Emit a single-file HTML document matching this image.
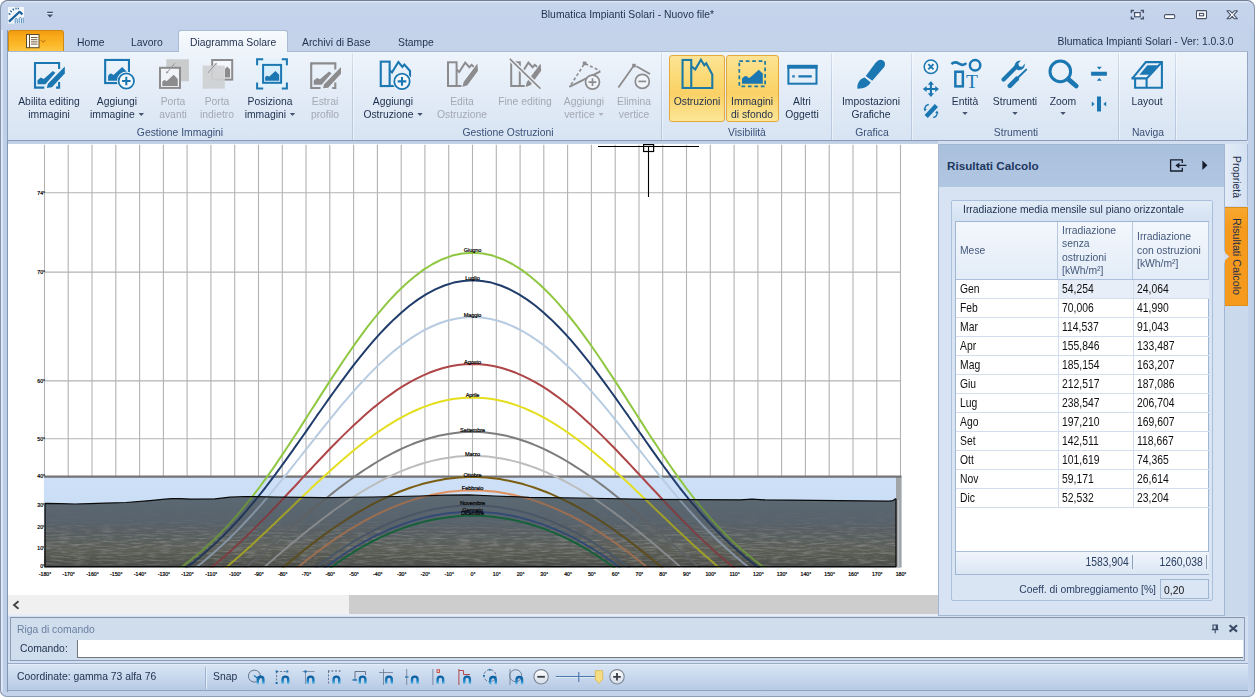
<!DOCTYPE html>
<html lang="it">
<head>
<meta charset="utf-8">
<title>Blumatica Impianti Solari - Nuovo file*</title>
<style>
*{box-sizing:border-box;margin:0;padding:0}
html,body{width:1255px;height:698px;overflow:hidden;background:#fff}
body{font-family:"Liberation Sans",sans-serif;font-size:11.5px;color:#1e2f4d;position:relative}
.abs{position:absolute}
#win{position:absolute;left:0;top:0;width:1255px;height:697px;background:#c4d3ea;border-radius:8px 8px 7px 7px;overflow:hidden}
#winborder{position:absolute;left:0;top:0;width:1255px;height:697px;border:1px solid #8895aa;border-top-color:#737f92;border-radius:8px 8px 7px 7px;border-bottom-color:#8c9db8;pointer-events:none;z-index:50}
#titlebar{position:absolute;left:1px;top:1px;width:1253px;height:29px;background:linear-gradient(#dbe6f5 0,#dbe6f5 1px,#c6d5ec 2px,#c3d2ea 100%)}
#title{position:absolute;left:0;top:8px;transform:scaleX(.9);width:1255px;text-align:center;font-size:11.5px;color:#1e2f4d}
#tabrow{position:absolute;left:0;top:30px;width:1255px;height:22px}
.tab{position:absolute;top:35.5px;transform:scaleX(.9);transform-origin:0 50%;font-size:11.5px;color:#1e2f4d;white-space:nowrap}
#acttab{position:absolute;left:178px;top:30px;width:110px;height:22px;background:linear-gradient(#f7fafd,#eef4fb);border:1px solid #a9bbd5;border-bottom:none;border-radius:3px 3px 0 0}
#appbtn{position:absolute;left:8px;top:30px;width:56px;height:22px;border-radius:3px 3px 0 0;border:1px solid #d08a10;border-bottom:none;background:linear-gradient(#f29a10,#f9aa1a 25%,#fcb626 60%,#fdc846)}
#ribbon{position:absolute;left:7px;top:51px;width:1241px;height:90px;background:linear-gradient(#eef4fb,#e3ecf7 45%,#d8e4f3);border:1px solid #8a9cb8;border-top-color:#a8b9d2;border-right-color:#93a5c0;border-radius:0 0 2px 2px}
#lband{position:absolute;left:1px;top:30px;width:7px;height:662px;background:linear-gradient(90deg,#dbe7f6 0,#dbe7f6 1.5px,#bed0e9 2.2px,#bccee8 5.9px,#8496b1 6.1px,#8496b1 100%)}
#rstrip{position:absolute;left:8px;top:141px;width:930px;height:3px;background:linear-gradient(#bccde3,#c6d4e7)}
#rband{position:absolute;left:1248px;top:30px;width:6px;height:662px;background:linear-gradient(90deg,#c3d3ea,#bccee8)}
#midbg{position:absolute;left:8px;top:141px;width:1240px;height:522px;background:#d3dff0}
.gsep{position:absolute;top:53px;width:1px;height:87px;background:linear-gradient(#d5dfed,#bdccdf 40%,#b8c8dd);box-shadow:1px 0 0 rgba(255,255,255,.45)}
.glab{position:absolute;top:125.6px;transform:scaleX(.9);font-size:11.5px;color:#3a5078;text-align:center;white-space:nowrap}
.rb{position:absolute;text-align:center;transform:scaleX(.9);font-size:11.5px;line-height:13px;color:#1e2f4d;white-space:nowrap}
.rb.dis{color:#a3a9b3}
.ic{position:absolute}
#canvas{position:absolute;left:8px;top:143.6px;width:930px;height:451.4px;background:#fff}
#hscroll{position:absolute;left:8px;top:595px;width:930px;height:19px;background:#f0f0f0;box-shadow:0 2px 0 #e6edf6}
#hthumb{position:absolute;left:341px;top:0;width:589px;height:19px;background:#cdcdcd}
</style>
<style>
body{font-size:11.5px}
.sx{display:inline-block;transform:scaleX(.9);transform-origin:0 50%;white-space:nowrap}
.hl{position:absolute;top:55px;height:67px;border:1px solid #e5a93a;border-radius:3px;background:linear-gradient(#fce395,#fbd973 35%,#fad166 58%,#fce698)}
.dd{display:inline-block;width:0;height:0;border-left:3px solid transparent;border-right:3px solid transparent;border-top:3px solid #44546f;vertical-align:middle;margin-left:1px}
.dd.d2{position:relative;top:-1.2px;margin-left:0}
.dd.dis{border-top-color:#b0b5bd}
#panel{position:absolute;left:938px;top:144px;width:287px;height:472px;background:#d7e3f2;border:1px solid #a3b7d3}
#phead{position:absolute;left:0;top:0;width:285px;height:42px;background:linear-gradient(#a9c0dd,#b1c6e1)}
#ptitle{position:absolute;left:8px;top:14px;font-weight:bold;font-size:11.7px;color:#1e3860;letter-spacing:0}
#gbox{position:absolute;left:12px;top:54.5px;width:262px;height:401px;border:1px solid #a9bfdb;border-radius:2px;background:#d9e5f3}
#gcap{position:absolute;left:0;top:0;width:260px;height:20px;padding:2.3px 0 0 11px;background:linear-gradient(#e2ecf7,#d3e1f2);color:#1e2f4d}
#grid{position:absolute;left:16px;top:76px;width:254px;height:354px;background:#fff;border:1px solid #9fb5d2}
.hrow{position:absolute;left:0;top:0;width:253px;height:57.5px;background:linear-gradient(#f3f7fc,#e3ecf7);border-bottom:1px solid #a9bfdb}
.hc{position:absolute;top:0;height:56.5px;border-right:1px solid #b5c8e0}
.hc span{position:absolute;left:3.8px;transform:scaleX(.9);transform-origin:0 0;line-height:13.3px;color:#44597c;white-space:nowrap}
.row{position:absolute;left:0;width:253px;height:19px;border-bottom:1px solid #d2deed;color:#111}
.row span{position:absolute;top:2.4px;transform:scaleX(.85);transform-origin:0 0;white-space:nowrap;font-size:12.2px}
.row b{position:absolute;left:103px;top:0;width:150px;height:18px;background:#e7eef7}
.row i{position:absolute;top:0;width:1px;height:19px;background:#d2deed}
.frow{position:absolute;left:0;top:329px;width:253px;height:23px;background:linear-gradient(#f0f5fb,#dbe6f4);border-top:1px solid #a9bfdb}
.ft{position:absolute;top:3.4px;transform:scaleX(.85);transform-origin:100% 0;text-align:right;padding-right:4px;color:#2b3f63;font-size:12.2px;border-right:1px solid #7f93b0;height:14px}
#coefl{transform:scaleX(.9);transform-origin:100% 0;position:absolute;left:57px;top:438px;width:160px;text-align:right;color:#2b3f63;font-size:11.5px}
#coefv{position:absolute;left:221px;top:434px;width:49px;height:20px;border:1px solid #9fb5d2;background:#dbe6f4;padding:4px 0 0 3px;color:#111;font-size:11.5px}
#sidetabs{position:absolute;left:1225px;top:144px;width:23px;height:472px;background:#cbd9ed}
#st1{position:absolute;left:0;top:0;width:23px;height:62px;background:linear-gradient(90deg,#e3ecf7,#d4e1f2);border-right:1px solid #a3b7d3}
#st2{position:absolute;left:0;top:63px;width:22.5px;height:98.5px;background:linear-gradient(#f8a830,#f59a1c 20%,#f59a1c);border:1px solid #dd8f1c;border-left:none;border-radius:0 1px 1px 0}
#st1 span,#st2 span{position:absolute;left:17.5px;top:11.5px;transform-origin:0 0;transform:rotate(90deg) scaleX(.9);white-space:nowrap;font-size:11.5px;color:#1e2f4d}
#st2 span{top:9.5px;transform:rotate(90deg) scaleX(.935)}
#cmd{position:absolute;left:10px;top:617px;width:1235px;height:44px;background:#d0dded;border:1px solid #8a9cb8;border-top-color:#8193ad}
#cmdh{transform:scaleX(.9);transform-origin:0 0;white-space:nowrap;position:absolute;left:6px;top:5px;color:#6b80a1;font-size:11.5px}
#cmdl{transform:scaleX(.9);transform-origin:0 0;white-space:nowrap;position:absolute;left:9px;top:24px;color:#1e2f4d;font-size:11.5px}
#cmdi{position:absolute;left:66px;top:22px;width:1166px;height:18px;background:#fff;border-left:1px solid #70757d;border-bottom:1px solid #70757d}
#status{position:absolute;left:8px;top:663px;width:1240px;height:28px;background:linear-gradient(#d9e5f4,#c8d8ed 50%,#b7cae4);border-top:1px solid #9aabc5;border-bottom:1px solid #8ea4c4;box-shadow:inset 0 1px 0 #e4edf8}
#coord{transform:scaleX(.9);transform-origin:0 0;white-space:nowrap;position:absolute;left:9px;top:6.3px;font-size:11.5px;color:#1e2f4d}
#ssep{position:absolute;left:197px;top:3px;width:1px;height:22px;background:#9db2d0;box-shadow:1px 0 0 #e6eef8}
#snap{transform:scaleX(.9);transform-origin:0 0;white-space:nowrap;position:absolute;left:205px;top:6.3px;font-size:11.5px;color:#1e2f4d}
</style>
</head>
<body>
<div id="win">
<div id="titlebar"></div>
<div id="lband"></div><div id="rband"></div><div id="midbg"></div><div id="rstrip"></div>
<div id="title">Blumatica Impianti Solari - Nuovo file*</div>
<svg class="abs" style="left:1120px;top:0" width="135" height="30" viewBox="1120 0 135 30" fill="none">
<g stroke="#47536b" stroke-width="1.1">
<path d="M1131.4 13V10.6H1134M1140.6 10.6H1143.3V13M1143.3 16.4V18.8H1140.6M1134 18.8H1131.4V16.4" stroke-width="1.5"/>
<rect x="1134.6" y="12.6" width="5.6" height="4.2" fill="#fff" stroke-width="1.2"/>
<rect x="1164.5" y="14.6" width="10.2" height="3.9" rx="1.2" fill="#fff"/>
<rect x="1196.5" y="10.6" width="10" height="8" rx="0.8" fill="#fff"/>
<rect x="1199.4" y="13.4" width="4.2" height="2.4" fill="#fff"/>
<path d="M1227 10.8H1230L1232.2 13.2L1234.4 10.8H1237.4L1233.8 14.8L1237.4 18.8H1234.4L1232.2 16.4L1230 18.8H1227L1230.6 14.8Z" fill="#fff" stroke-linejoin="round"/>
</g>
</svg>

<div id="appbtn"></div>
<svg class="abs" style="left:0;top:0" width="80" height="52" viewBox="0 0 80 52" fill="none">
<rect x="8" y="7" width="16" height="16.6" fill="#f2f6fb"/>
<path d="M9 21.6L19.6 11.8L22.4 14.4" stroke="#1a5f98" stroke-width="2.2" stroke-linejoin="round"/>
<path d="M8.6 13.6L10.4 14.4M10.2 10.6L11.8 12M12.8 8.6L13.8 10.4M15.8 7.6L16.2 9.4M18.4 7.6L18.2 9.2" stroke="#1a5f98" stroke-width="1.2"/>
<path d="M15.2 23.4V19.4C15.2 18.2 17.2 18.2 17.2 19.4V23.4M19.2 23.4V18.6C19.2 17.2 21.4 17.2 21.4 18.6V23.4M23.2 23.4V17.6" stroke="#3d7fb2" stroke-width="0.9"/>
<path d="M47.2 12.4H52.8" stroke="#3f4d66" stroke-width="1.2"/><path d="M47 14.4H53L50 17.6Z" fill="#3f4d66"/>
<path d="M47.2 13.6H52.8" stroke="#eef3fa" stroke-width="0.8" opacity="0.8"/>
<rect x="26.5" y="34.5" width="12.5" height="13.2" fill="#fffdf6" stroke="#5c4a2a" stroke-width="1"/>
<path d="M29.5 34.5V47.7" stroke="#5c4a2a" stroke-width="1"/>
<path d="M31 37.5H37.5M31 39.7H37.5M31 41.9H37.5M31 44.1H37.5" stroke="#5c4a2a" stroke-width="0.9"/>
<path d="M40.8 39.8L43.2 42.2L45.6 39.8" stroke="#c9821a" stroke-width="1.1"/>
</svg>

<div class="tab" style="left:77px">Home</div>
<div class="tab" style="left:131px">Lavoro</div>
<div id="ribbon"></div>
<div id="acttab"></div>
<div class="tab" style="left:190px">Diagramma Solare</div>
<div class="tab" style="left:302px">Archivi di Base</div>
<div class="tab" style="left:398px">Stampe</div>
<div class="tab" style="right:21px;top:34.5px;transform-origin:100% 50%">Blumatica Impianti Solari - Ver: 1.0.3.0</div>
<div class="gsep" style="left:352px"></div>
<div class="gsep" style="left:661px"></div>
<div class="gsep" style="left:831px"></div>
<div class="gsep" style="left:911px"></div>
<div class="gsep" style="left:1118px"></div>
<div class="gsep" style="left:1175px"></div>
<div class="glab" style="left:80px;width:200px">Gestione Immagini</div>
<div class="glab" style="left:408px;width:200px">Gestione Ostruzioni</div>
<div class="glab" style="left:697px;width:100px">Visibilità</div>
<div class="glab" style="left:822px;width:100px">Grafica</div>
<div class="glab" style="left:966px;width:100px">Strumenti</div>
<div class="glab" style="left:1098px;width:100px">Naviga</div>
<div class="hl" style="left:669px;width:56px"></div>
<div class="hl" style="left:726px;width:53px"></div>
<div class="rb" style="left:-1px;width:100px;top:95px">Abilita editing<br>immagini</div>
<div class="rb" style="left:67px;width:100px;top:95px">Aggiungi<br>immagine <span class="dd"></span></div>
<div class="rb dis" style="left:123px;width:100px;top:95px">Porta<br>avanti</div>
<div class="rb dis" style="left:167px;width:100px;top:95px">Porta<br>indietro</div>
<div class="rb" style="left:220px;width:100px;top:95px">Posiziona<br>immagini <span class="dd"></span></div>
<div class="rb dis" style="left:275px;width:100px;top:95px">Estrai<br>profilo</div>
<div class="rb" style="left:343px;width:100px;top:95px">Aggiungi<br>Ostruzione <span class="dd"></span></div>
<div class="rb dis" style="left:412px;width:100px;top:95px">Edita<br>Ostruzione</div>
<div class="rb dis" style="left:475px;width:100px;top:95px">Fine editing</div>
<div class="rb dis" style="left:534px;width:100px;top:95px">Aggiungi<br>vertice <span class="dd dis"></span></div>
<div class="rb dis" style="left:584px;width:100px;top:95px">Elimina<br>vertice</div>
<div class="rb" style="left:647px;width:100px;top:95px">Ostruzioni</div>
<div class="rb" style="left:702px;width:100px;top:95px">Immagini<br>di sfondo</div>
<div class="rb" style="left:752px;width:100px;top:95px">Altri<br>Oggetti</div>
<div class="rb" style="left:821px;width:100px;top:95px">Impostazioni<br>Grafiche</div>
<div class="rb" style="left:915px;width:100px;top:95px">Entità<br><span class="dd d2"></span></div>
<div class="rb" style="left:965px;width:100px;top:95px">Strumenti<br><span class="dd d2"></span></div>
<div class="rb" style="left:1013px;width:100px;top:95px">Zoom<br><span class="dd d2"></span></div>
<div class="rb" style="left:1097px;width:100px;top:95px">Layout</div>
<svg class="abs" style="left:0;top:0" width="1255" height="142" viewBox="0 0 1255 142" fill="none">
<defs><path id="mtn" d="M0 13.6V8.7L1.5 7L2.7 6.5L4 7L5.4 7.9L14.1 0L19.3 5.1V13.6Z"/></defs>
<!-- 1 --><g transform="translate(0 0)"><path d="M35 63H59.1V69M59.1 82V87.6H56M44.3 87.6H35V63" stroke="#1b77b2" stroke-width="2.1" stroke-linejoin="miter" stroke-linecap="butt"/><path d="M33.95 63H36" stroke="#1b77b2" stroke-width="2.1"/><path d="M37.5 84.3V80.2L40.8 77.5L43.8 78.9L52.8 71L55.4 72.8L45.4 84.3Z" fill="#1b77b2"/><path d="M46.8 87.9L47.9 83.8L64.8 66.6V73.4L52 87.3Z" fill="#1b77b2" stroke="#edf4fb" stroke-width="1.6" paint-order="stroke"/></g>
<!-- 2 --><rect x="105.15" y="59.95" width="23.8" height="23.1" stroke="#1b77b2" stroke-width="2.1"/>
<use href="#mtn" transform="translate(108.1 67.1) scale(1.000 1.000)" fill="#1b77b2"/>
<circle cx="126.3" cy="81" r="7.7" fill="#f4f8fc" stroke="#eef5fb" stroke-width="3.6"/><circle cx="126.3" cy="81" r="7.7" fill="#f4f8fc" stroke="#1b77b2" stroke-width="1.8"/>
<path d="M122 81H130.6M126.3 76.7V85.3" stroke="#1b77b2" stroke-width="2.1"/>
<!-- 3 --><rect x="166.3" y="59.3" width="22.6" height="22" fill="#c9cbcc"/>
<rect x="160" y="67.8" width="20" height="20.1" fill="#f0f4f9" stroke="#8c8c8e" stroke-width="2"/>
<use href="#mtn" transform="translate(162.3 74.7) scale(0.803 0.824)" fill="#8c8c8e"/>
<path d="M175 63.1L166.6 73" stroke="#969698" stroke-width="1"/><path d="M166 73.8L166.6 70.9L168.6 72.6Z" fill="#969698"/>
<!-- 4 --><rect x="212.2" y="60" width="20" height="19.6" fill="#f4f7fb" stroke="#8c8c8e" stroke-width="2"/>
<path d="M225 77.5V69L227.2 66.6L230.1 69.5V77.5Z" fill="#8c8c8e"/>
<rect x="202.7" y="65.6" width="22.1" height="23.1" fill="#cfd1d2" fill-opacity="0.93"/>
<path d="M208 72.9L216 63.6" stroke="#969698" stroke-width="1"/><path d="M216.8 62.7L216.2 65.7L214.1 63.9Z" fill="#969698"/>
<!-- 5 --><rect x="257" y="59.2" width="30" height="29.4" fill="#e3f1fb"/>
<path d="M257.1 65.3V59.2H263.2M281.8 59.2H286.9V65.3M286.9 82.5V88.6H281.8M263.2 88.6H257.1V82.5" stroke="#1b77b2" stroke-width="2"/>
<rect x="263.1" y="64.9" width="18" height="17.9" stroke="#1b77b2" stroke-width="2" fill="#d9eefb"/>
<use href="#mtn" transform="translate(265.1 71) scale(0.731 0.721)" fill="#1b77b2"/>
<!-- 6 --><g transform="translate(276.2 0.4)"><path d="M35 63H59.1V69M59.1 82V87.6H56M44.3 87.6H35V63" stroke="#8c8c8e" stroke-width="2.1" stroke-linejoin="miter" stroke-linecap="butt"/><path d="M33.95 63H36" stroke="#8c8c8e" stroke-width="2.1"/><path d="M37.5 84.3V80.2L40.8 77.5L43.8 78.9L52.8 71L55.4 72.8L45.4 84.3Z" fill="#8c8c8e"/><path d="M46.8 87.9L47.9 83.8L64.8 66.6V73.4L52 87.3Z" fill="#8c8c8e" stroke="#edf3fa" stroke-width="1.6" paint-order="stroke"/></g>
<!-- 7 --><g stroke="#1b77b2" stroke-width="2.1"><rect x="380.75" y="61.65" width="8.9" height="24.4"/><path d="M389.6 70.2L392 72.3L398.4 62L402.4 66.8L404.4 64.6L410 71V77M389.6 86.05H395"/></g>
<circle cx="402" cy="81.4" r="7.7" fill="#f4f8fc" stroke="#eef5fb" stroke-width="3.6"/><circle cx="402" cy="81.4" r="7.7" fill="#f4f8fc" stroke="#1b77b2" stroke-width="1.8"/>
<path d="M397.7 81.4H406.3M402 77.1V85.7" stroke="#1b77b2" stroke-width="2.1"/>
<!-- 8 --><g transform="translate(0 0)"><g stroke="#8c8c8e" stroke-width="2"><rect x="448" y="62.3" width="8.6" height="23.7"/><path d="M456.6 69.6L459.2 72L465.2 62.6L469.4 67.2L471.6 64.8L474 67M456.6 86H461.5"/></g><path d="M462.4 87L463.6 82L477.4 63.4L478 70.8L467.4 85.2Z" fill="#8c8c8e" stroke="#edf3fa" stroke-width="1.4" paint-order="stroke"/></g>
<!-- 9 --><g transform="translate(63.2 0)"><g stroke="#8c8c8e" stroke-width="2"><rect x="448" y="62.3" width="8.6" height="23.7"/><path d="M456.6 69.6L459.2 72L465.2 62.6L469.4 67.2L471.6 64.8L474 67M456.6 86H461.5"/></g><path d="M462.4 87L463.6 82L477.4 63.4L478 70.8L467.4 85.2Z" fill="#8c8c8e" stroke="#edf3fa" stroke-width="1.4" paint-order="stroke"/><path d="M446.6 58.9L477.2 88.6" stroke="#edf3fa" stroke-width="4.4"/><path d="M446.6 58.9L477.2 88.6" stroke="#8c8c8e" stroke-width="1.7"/></g>
<!-- 10 --><path d="M569.3 86.9L600.4 71.4" stroke="#8c8c8e" stroke-width="1.8"/>
<path d="M571 84.6L584.6 63.4L600 70.8" stroke="#8c8c8e" stroke-width="1.6" stroke-dasharray="3 2.2"/>
<rect x="582.8" y="61.6" width="3.6" height="3.6" fill="#8c8c8e"/>
<circle cx="592.5" cy="82.1" r="7" fill="#f1f5fa" stroke="#8c8c8e" stroke-width="1.7"/><path d="M588.6 82.1H596.4M592.5 78.2V86" stroke="#8c8c8e" stroke-width="1.7"/>
<!-- 11 --><path d="M618.4 87.6L633.2 66.6M636.4 66.2L650 74" stroke="#8c8c8e" stroke-width="1.8"/>
<rect x="632.2" y="63.8" width="3.6" height="3.6" fill="#8c8c8e"/>
<circle cx="642.3" cy="81.4" r="7" fill="#f1f5fa" stroke="#8c8c8e" stroke-width="1.7"/><path d="M638.4 81.4H646.2" stroke="#8c8c8e" stroke-width="1.7"/>
<!-- 12 --><g stroke="#1b7aa6" stroke-width="2.1"><rect x="682.55" y="59.95" width="8.7" height="28"/><path d="M691.3 66.3L695.3 69.4L700.9 59.8L704.3 65.2L706.2 63.2L712.3 74.4V87.95H691.3"/></g>
<!-- 13 --><rect x="739.3" y="61.1" width="25.8" height="25.2" stroke="#1b7aa6" stroke-width="1.7" stroke-dasharray="3.7 2.75"/>
<path d="M742 83.8V78.6L744.6 76.2L746.6 76L748.6 78L750.4 77.2L758.8 69.8L761.6 72.4L762.8 73.4V83.8Z" fill="#1b77b2"/>
<!-- 14 --><rect x="788.4" y="65.9" width="28.1" height="17.8" stroke="#1b77b2" stroke-width="2"/><rect x="787.4" y="64.9" width="30.1" height="3.8" fill="#1b77b2"/>
<path d="M792.3 76.4H794.7M798.4 76.4H811.8" stroke="#1b77b2" stroke-width="2.2"/>
<!-- 15 --><path d="M877.8 60.8C880.2 59 883.4 59.8 884.6 62.2C885.4 64 885 65.8 883.8 67.4L872.2 80.8L865.8 76L875.4 63Z" fill="#1b77b2"/>
<path d="M864.6 77.6L870.6 82.2C868.6 86.2 864.4 88.4 857.4 88.8C856.8 84 859.2 79.4 864.6 77.6Z" fill="#1b77b2"/>
<!-- 16 --><circle cx="930.9" cy="66.8" r="6.7" stroke="#1b77b2" stroke-width="1.5" fill="#f1f6fb"/>
<path d="M928.3 64.2L933.5 69.4M933.5 64.2L928.3 69.4" stroke="#1b77b2" stroke-width="1.9"/>
<path d="M924.6 89H937.2M930.9 82.7V95.3" stroke="#1b77b2" stroke-width="2.1"/>
<path d="M930.9 80.9L934 84.7H927.8ZM930.9 97.1L934 93.3H927.8ZM922.8 89L926.6 85.9V92.1ZM939 89L935.2 85.9V92.1Z" fill="#1b77b2"/>
<path d="M926.2 116.6L936.4 105.4" stroke="#1b77b2" stroke-width="4.4"/>
<path d="M924.8 110C924.6 107 926.2 105 928.8 104.5M937.2 112C937.4 115 935.8 117 933.2 117.5" stroke="#1b77b2" stroke-width="1.3"/>
<path d="M923.4 108.6L924.9 111.6L926.8 108.9ZM938.6 113.4L937.1 110.4L935.2 113.1Z" fill="#1b77b2"/>
<!-- 17 --><path d="M951.4 64C954.2 61.6 956.8 62.2 959 63.6C961.4 65.2 963.8 65.6 966.4 63.2" stroke="#1b77b2" stroke-width="2.5"/>
<circle cx="975.1" cy="65.3" r="5.2" stroke="#1b77b2" stroke-width="2.5"/>
<rect x="955.35" y="71.75" width="7.5" height="14.6" stroke="#1b77b2" stroke-width="2.5"/>
<text x="972" y="88.4" font-family="Liberation Serif, serif" font-size="19.5" text-anchor="middle" fill="#1b77b2">T</text>
<!-- 18 --><path d="M1003.6 79.4L1016.6 66.4" stroke="#1b77b2" stroke-width="4.2" stroke-linecap="round"/>
<path d="M1014.8 67.8C1013.6 63.8 1016.8 60.2 1020.8 60.6L1018.2 63.8L1019.4 66.4L1022.4 66.8L1024.6 63.6C1025.4 67.8 1021.6 71 1017.8 70Z" fill="#1b77b2"/>
<path d="M1009.8 85.8L1016.8 78.8" stroke="#1b77b2" stroke-width="4.6" stroke-linecap="round"/>
<path d="M1016.8 78.8L1026.2 69.6" stroke="#1b77b2" stroke-width="2" stroke-linecap="round"/>
<!-- 19 --><circle cx="1060.3" cy="71.4" r="10.3" stroke="#1b77b2" stroke-width="3"/>
<path d="M1068.2 79.2L1076.2 86" stroke="#1b77b2" stroke-width="4.8" stroke-linecap="round"/>
<!-- 20 --><path d="M1091.1 73.8H1106.9" stroke="#1b77b2" stroke-width="4"/>
<path d="M1096.8 66.8H1101.8L1099.3 69.6ZM1096.8 80.8H1101.8L1099.3 78Z" fill="#1b77b2"/>
<path d="M1099 96.5V111.5" stroke="#1b77b2" stroke-width="4"/>
<path d="M1091.8 101.5V106.5L1094.6 104ZM1106.2 101.5V106.5L1103.4 104Z" fill="#1b77b2"/>
<!-- 21 --><g stroke="#1b77b2" stroke-width="2.1"><path d="M1132.4 78.4L1145.8 62.1H1161.9V87.7H1135.1V78.4"/><path d="M1131.4 78.4H1146.8L1161.4 62.6M1146.6 79V87.7"/></g>
<path d="M1139.4 74.8L1147.4 65.2H1158L1149.6 74.8Z" fill="#1b77b2"/>
</svg>
<div id="canvas"></div>
<svg class="abs" style="left:8px;top:143px" width="930" height="452" viewBox="8 143 930 452" font-family="Liberation Sans, sans-serif">
<defs><linearGradient id="sky" x1="0" y1="0" x2="0" y2="1"><stop offset="0" stop-color="#cde0f7"/><stop offset="1" stop-color="#c3d9f3"/></linearGradient><linearGradient id="ter" gradientUnits="userSpaceOnUse" x1="0" y1="495" x2="0" y2="567"><stop offset="0" stop-color="#7a8b97"/><stop offset="0.33" stop-color="#74808a"/><stop offset="0.54" stop-color="#747a7a"/><stop offset="0.74" stop-color="#7c7b6c"/><stop offset="0.9" stop-color="#6b6a5c"/><stop offset="1" stop-color="#5b5b52"/></linearGradient><linearGradient id="nzg" gradientUnits="userSpaceOnUse" x1="0" y1="505" x2="0" y2="567"><stop offset="0" stop-color="#000"/><stop offset="0.25" stop-color="#333"/><stop offset="0.55" stop-color="#fff"/><stop offset="0.9" stop-color="#fff"/><stop offset="1" stop-color="#666"/></linearGradient><mask id="nzm"><rect x="44" y="500" width="860" height="70" fill="url(#nzg)"/></mask><filter id="nz" x="0" y="0" width="100%" height="100%"><feTurbulence type="fractalNoise" baseFrequency="0.07 0.55" numOctaves="3" seed="11" result="t"/><feColorMatrix in="t" type="matrix" values="0 0 0 0 0.80  0 0 0 0 0.79  0 0 0 0 0.72  2.4 0 0 0 -1.0"/></filter><clipPath id="cimg"><rect x="44" y="477" width="858" height="90.4"/></clipPath><clipPath id="cplot"><rect x="8" y="143" width="930" height="424.4"/></clipPath></defs>
<path d="M44.5 144.7V567M68.2 144.7V567M92.0 144.7V567M115.8 144.7V567M139.6 144.7V567M163.4 144.7V567M187.1 144.7V567M210.9 144.7V567M234.7 144.7V567M258.5 144.7V567M282.3 144.7V567M306.0 144.7V567M329.8 144.7V567M353.6 144.7V567M377.4 144.7V567M401.2 144.7V567M424.9 144.7V567M448.7 144.7V567M472.5 144.7V567M496.3 144.7V567M520.1 144.7V567M543.8 144.7V567M567.6 144.7V567M591.4 144.7V567M615.2 144.7V567M639.0 144.7V567M662.7 144.7V567M686.5 144.7V567M710.3 144.7V567M734.1 144.7V567M757.9 144.7V567M781.6 144.7V567M805.4 144.7V567M829.2 144.7V567M853.0 144.7V567M876.8 144.7V567M900.5 144.7V567M44 566.6H901M44 547.7H901M44 527.6H901M44 504.7H901M44 476.6H901M44 438.8H901M44 380.9H901M44 272.1H901M44 192.7H901" fill="none" stroke="#b3b3b3" stroke-width="1.1"/>
<text x="45.2" y="568.4" font-size="5.2" text-anchor="end" fill="#000" stroke="#000" stroke-width="0.2" letter-spacing="0">0°</text>
<text x="45.2" y="549.5" font-size="5.2" text-anchor="end" fill="#000" stroke="#000" stroke-width="0.2" letter-spacing="0">10°</text>
<text x="45.2" y="529.4" font-size="5.2" text-anchor="end" fill="#000" stroke="#000" stroke-width="0.2" letter-spacing="0">20°</text>
<text x="45.2" y="506.5" font-size="5.2" text-anchor="end" fill="#000" stroke="#000" stroke-width="0.2" letter-spacing="0">30°</text>
<text x="45.2" y="478.4" font-size="5.2" text-anchor="end" fill="#000" stroke="#000" stroke-width="0.2" letter-spacing="0">40°</text>
<text x="45.2" y="440.6" font-size="5.2" text-anchor="end" fill="#000" stroke="#000" stroke-width="0.2" letter-spacing="0">50°</text>
<text x="45.2" y="382.7" font-size="5.2" text-anchor="end" fill="#000" stroke="#000" stroke-width="0.2" letter-spacing="0">60°</text>
<text x="45.2" y="273.9" font-size="5.2" text-anchor="end" fill="#000" stroke="#000" stroke-width="0.2" letter-spacing="0">70°</text>
<text x="45.2" y="194.5" font-size="5.2" text-anchor="end" fill="#000" stroke="#000" stroke-width="0.2" letter-spacing="0">74°</text>
<rect x="44" y="477" width="857.5" height="90.4" fill="url(#sky)"/>
<path d="M45 503.3 L60 503.6 L75 504 L90 503.6 L105 503.2 L126 502.5 L150 500.6 L165 499.2 L172 498.6 L180 498.6 L190 499.1 L215 498.8 L230 497.2 L245 496.5 L280 497.2 L325 497.5 L373 497 L420 496 L445 495.1 L469 494.9 L495 496 L529 497.3 L580 498 L647 499.3 L740 499.8 L752 499.2 L765 499.8 L838 500.6 L889 501.2 L893 500.6 L895.5 498.8 L896 499 L896 567.4 L44 567.4Z" fill="url(#ter)"/>
<g mask="url(#nzm)"><rect x="44" y="500" width="852" height="67.4" filter="url(#nz)" opacity="0.45"/></g>
<path d="M896 477H901.5V567.4H896Z" fill="#a2a5a8"/><path d="M898.5 500V567" stroke="#c9ccd0" stroke-width="1.5" opacity="0.7"/>
<path d="M44 476.6H901.5" stroke="#737373" stroke-width="2.2"/>
<g clip-path="url(#cplot)" fill="none" stroke-width="2" stroke-linejoin="round">
<path d="M175.3 571.4 L177.8 569.7 L180.2 568.0 L182.6 566.2 L185.0 564.4 L187.3 562.6 L189.7 560.8 L192.0 559.0 L194.3 557.1 L196.5 555.2 L198.8 553.3 L201.1 551.4 L203.3 549.5 L205.5 547.5 L207.7 545.5 L209.9 543.4 L212.1 541.4 L214.3 539.3 L216.4 537.2 L218.6 535.0 L220.8 532.9 L222.9 530.6 L225.1 528.4 L227.3 526.1 L229.4 523.7 L231.6 521.4 L233.8 518.9 L236.0 516.5 L238.2 513.9 L240.4 511.3 L242.6 508.7 L244.8 506.0 L247.1 503.2 L249.3 500.4 L251.6 497.5 L253.9 494.5 L256.3 491.4 L258.7 488.3 L261.1 485.0 L263.5 481.7 L266.0 478.3 L268.6 474.7 L271.1 471.1 L273.8 467.3 L276.5 463.4 L279.2 459.3 L282.1 455.1 L285.0 450.8 L287.9 446.3 L291.0 441.6 L294.2 436.7 L297.5 431.7 L300.9 426.4 L304.4 420.9 L308.0 415.2 L311.8 409.2 L315.8 403.1 L319.9 396.6 L324.2 389.9 L328.7 382.9 L333.5 375.6 L338.5 368.1 L343.7 360.3 L349.2 352.2 L355.0 343.9 L361.2 335.4 L367.6 326.7 L374.5 318.0 L381.7 309.3 L389.2 300.6 L397.2 292.2 L405.5 284.2 L414.3 276.7 L423.3 269.9 L432.7 264.0 L442.4 259.2 L452.3 255.6 L462.4 253.4 L472.5 252.7 L482.6 253.4 L492.7 255.6 L502.6 259.2 L512.3 264.0 L521.7 269.9 L530.7 276.7 L539.5 284.2 L547.8 292.2 L555.8 300.6 L563.3 309.3 L570.5 318.0 L577.4 326.7 L583.8 335.4 L590.0 343.9 L595.8 352.2 L601.3 360.3 L606.5 368.1 L611.5 375.6 L616.3 382.9 L620.8 389.9 L625.1 396.6 L629.2 403.1 L633.2 409.2 L637.0 415.2 L640.6 420.9 L644.1 426.4 L647.5 431.7 L650.8 436.7 L654.0 441.6 L657.1 446.3 L660.0 450.8 L662.9 455.1 L665.8 459.3 L668.5 463.4 L671.2 467.3 L673.9 471.1 L676.4 474.7 L679.0 478.3 L681.5 481.7 L683.9 485.0 L686.3 488.3 L688.7 491.4 L691.1 494.5 L693.4 497.5 L695.7 500.4 L697.9 503.2 L700.2 506.0 L702.4 508.7 L704.6 511.3 L706.8 513.9 L709.0 516.5 L711.2 518.9 L713.4 521.4 L715.6 523.7 L717.7 526.1 L719.9 528.4 L722.1 530.6 L724.2 532.9 L726.4 535.0 L728.6 537.2 L730.7 539.3 L732.9 541.4 L735.1 543.4 L737.3 545.5 L739.5 547.5 L741.7 549.5 L743.9 551.4 L746.2 553.3 L748.5 555.2 L750.7 557.1 L753.0 559.0 L755.3 560.8 L757.7 562.6 L760.0 564.4 L762.4 566.2 L764.8 568.0 L767.2 569.7 L769.7 571.4" stroke="#8fc742"/>
<path d="M180.4 572.0 L182.9 570.3 L185.3 568.5 L187.7 566.7 L190.1 564.9 L192.5 563.0 L194.8 561.2 L197.1 559.3 L199.4 557.4 L201.7 555.5 L204.0 553.6 L206.3 551.6 L208.5 549.6 L210.7 547.6 L213.0 545.6 L215.2 543.5 L217.4 541.4 L219.6 539.3 L221.8 537.2 L224.0 535.0 L226.2 532.8 L228.4 530.6 L230.6 528.3 L232.8 526.0 L235.0 523.6 L237.2 521.2 L239.4 518.8 L241.7 516.3 L243.9 513.7 L246.2 511.1 L248.4 508.4 L250.7 505.7 L253.1 502.9 L255.4 500.1 L257.8 497.2 L260.2 494.2 L262.6 491.1 L265.1 488.0 L267.6 484.7 L270.1 481.4 L272.7 477.9 L275.4 474.4 L278.1 470.7 L280.8 467.0 L283.6 463.1 L286.5 459.1 L289.5 454.9 L292.6 450.6 L295.7 446.1 L299.0 441.5 L302.3 436.7 L305.8 431.8 L309.4 426.6 L313.1 421.3 L316.9 415.7 L321.0 410.0 L325.2 404.0 L329.5 397.9 L334.1 391.5 L338.9 384.9 L343.9 378.1 L349.1 371.1 L354.6 363.9 L360.4 356.6 L366.5 349.2 L372.8 341.7 L379.5 334.1 L386.5 326.7 L393.9 319.4 L401.5 312.4 L409.5 305.7 L417.8 299.6 L426.4 294.1 L435.3 289.3 L444.4 285.5 L453.7 282.6 L463.1 280.9 L472.5 280.3 L481.9 280.9 L491.3 282.6 L500.6 285.5 L509.7 289.3 L518.6 294.1 L527.2 299.6 L535.5 305.7 L543.5 312.4 L551.1 319.4 L558.5 326.7 L565.5 334.1 L572.2 341.7 L578.5 349.2 L584.6 356.6 L590.4 363.9 L595.9 371.1 L601.1 378.1 L606.1 384.9 L610.9 391.5 L615.5 397.9 L619.8 404.0 L624.0 410.0 L628.1 415.7 L631.9 421.3 L635.6 426.6 L639.2 431.8 L642.7 436.7 L646.0 441.5 L649.3 446.1 L652.4 450.6 L655.5 454.9 L658.5 459.1 L661.4 463.1 L664.2 467.0 L666.9 470.7 L669.6 474.4 L672.3 477.9 L674.9 481.4 L677.4 484.7 L679.9 488.0 L682.4 491.1 L684.8 494.2 L687.2 497.2 L689.6 500.1 L691.9 502.9 L694.3 505.7 L696.6 508.4 L698.8 511.1 L701.1 513.7 L703.3 516.3 L705.6 518.8 L707.8 521.2 L710.0 523.6 L712.2 526.0 L714.4 528.3 L716.6 530.6 L718.8 532.8 L721.0 535.0 L723.2 537.2 L725.4 539.3 L727.6 541.4 L729.8 543.5 L732.0 545.6 L734.3 547.6 L736.5 549.6 L738.7 551.6 L741.0 553.6 L743.3 555.5 L745.6 557.4 L747.9 559.3 L750.2 561.2 L752.5 563.0 L754.9 564.9 L757.3 566.7 L759.7 568.5 L762.1 570.3 L764.6 572.0" stroke="#1f3c6b"/>
<path d="M189.8 572.2 L192.2 570.3 L194.6 568.5 L197.0 566.6 L199.4 564.7 L201.8 562.9 L204.1 560.9 L206.5 559.0 L208.8 557.1 L211.1 555.1 L213.4 553.1 L215.6 551.1 L217.9 549.0 L220.2 547.0 L222.4 544.9 L224.7 542.8 L226.9 540.7 L229.2 538.5 L231.4 536.3 L233.6 534.1 L235.9 531.9 L238.1 529.6 L240.4 527.2 L242.7 524.9 L244.9 522.5 L247.2 520.0 L249.5 517.5 L251.9 515.0 L254.2 512.4 L256.6 509.8 L258.9 507.1 L261.4 504.3 L263.8 501.5 L266.3 498.6 L268.8 495.7 L271.3 492.7 L273.9 489.6 L276.5 486.4 L279.2 483.1 L281.9 479.8 L284.7 476.3 L287.6 472.8 L290.5 469.1 L293.5 465.4 L296.5 461.5 L299.7 457.5 L302.9 453.4 L306.3 449.2 L309.7 444.8 L313.3 440.3 L316.9 435.7 L320.7 430.9 L324.7 425.9 L328.8 420.9 L333.0 415.6 L337.4 410.2 L342.0 404.7 L346.8 399.1 L351.8 393.3 L357.0 387.4 L362.5 381.5 L368.1 375.4 L374.0 369.4 L380.2 363.4 L386.6 357.4 L393.3 351.6 L400.3 346.0 L407.5 340.6 L415.0 335.6 L422.7 331.0 L430.6 327.0 L438.8 323.5 L447.0 320.7 L455.5 318.7 L464.0 317.4 L472.5 317.0 L481.0 317.4 L489.5 318.7 L498.0 320.7 L506.2 323.5 L514.4 327.0 L522.3 331.0 L530.0 335.6 L537.5 340.6 L544.7 346.0 L551.7 351.6 L558.4 357.4 L564.8 363.4 L571.0 369.4 L576.9 375.4 L582.5 381.5 L588.0 387.4 L593.2 393.3 L598.2 399.1 L603.0 404.7 L607.6 410.2 L612.0 415.6 L616.2 420.9 L620.3 425.9 L624.3 430.9 L628.1 435.7 L631.7 440.3 L635.3 444.8 L638.7 449.2 L642.1 453.4 L645.3 457.5 L648.5 461.5 L651.5 465.4 L654.5 469.1 L657.4 472.8 L660.3 476.3 L663.1 479.8 L665.8 483.1 L668.5 486.4 L671.1 489.6 L673.7 492.7 L676.2 495.7 L678.7 498.6 L681.2 501.5 L683.6 504.3 L686.1 507.1 L688.4 509.8 L690.8 512.4 L693.1 515.0 L695.5 517.5 L697.8 520.0 L700.1 522.5 L702.3 524.9 L704.6 527.2 L706.9 529.6 L709.1 531.9 L711.4 534.1 L713.6 536.3 L715.8 538.5 L718.1 540.7 L720.3 542.8 L722.6 544.9 L724.8 547.0 L727.1 549.0 L729.4 551.1 L731.6 553.1 L733.9 555.1 L736.2 557.1 L738.5 559.0 L740.9 560.9 L743.2 562.9 L745.6 564.7 L748.0 566.6 L750.4 568.5 L752.8 570.3 L755.2 572.2" stroke="#b7cbe1"/>
<path d="M207.3 570.9 L209.7 568.9 L212.1 567.0 L214.5 565.0 L216.8 563.0 L219.2 561.0 L221.6 559.0 L223.9 557.0 L226.2 554.9 L228.5 552.9 L230.9 550.8 L233.2 548.7 L235.5 546.6 L237.8 544.5 L240.1 542.3 L242.4 540.1 L244.7 537.9 L247.0 535.7 L249.4 533.4 L251.7 531.1 L254.1 528.8 L256.4 526.4 L258.8 524.1 L261.2 521.6 L263.7 519.2 L266.1 516.6 L268.6 514.1 L271.1 511.5 L273.6 508.8 L276.2 506.2 L278.8 503.4 L281.4 500.6 L284.1 497.7 L286.8 494.8 L289.6 491.8 L292.5 488.8 L295.4 485.7 L298.3 482.5 L301.3 479.2 L304.4 475.9 L307.6 472.5 L310.9 469.0 L314.2 465.4 L317.6 461.8 L321.2 458.0 L324.8 454.2 L328.5 450.3 L332.4 446.3 L336.4 442.3 L340.5 438.1 L344.8 433.9 L349.2 429.6 L353.7 425.3 L358.5 420.9 L363.3 416.5 L368.4 412.0 L373.6 407.6 L379.1 403.2 L384.7 398.8 L390.5 394.6 L396.4 390.4 L402.6 386.4 L409.0 382.6 L415.5 379.1 L422.2 375.8 L429.1 372.8 L436.1 370.2 L443.2 368.0 L450.4 366.3 L457.7 365.0 L465.1 364.3 L472.5 364.0 L479.9 364.3 L487.3 365.0 L494.6 366.3 L501.8 368.0 L508.9 370.2 L515.9 372.8 L522.8 375.8 L529.5 379.1 L536.0 382.6 L542.4 386.4 L548.6 390.4 L554.5 394.6 L560.3 398.8 L565.9 403.2 L571.4 407.6 L576.6 412.0 L581.7 416.5 L586.5 420.9 L591.3 425.3 L595.8 429.6 L600.2 433.9 L604.5 438.1 L608.6 442.3 L612.6 446.3 L616.5 450.3 L620.2 454.2 L623.8 458.0 L627.4 461.8 L630.8 465.4 L634.1 469.0 L637.4 472.5 L640.6 475.9 L643.7 479.2 L646.7 482.5 L649.6 485.7 L652.5 488.8 L655.4 491.8 L658.2 494.8 L660.9 497.7 L663.6 500.6 L666.2 503.4 L668.8 506.2 L671.4 508.8 L673.9 511.5 L676.4 514.1 L678.9 516.6 L681.3 519.2 L683.8 521.6 L686.2 524.1 L688.6 526.4 L690.9 528.8 L693.3 531.1 L695.6 533.4 L698.0 535.7 L700.3 537.9 L702.6 540.1 L704.9 542.3 L707.2 544.5 L709.5 546.6 L711.8 548.7 L714.1 550.8 L716.5 552.9 L718.8 554.9 L721.1 557.0 L723.4 559.0 L725.8 561.0 L728.2 563.0 L730.5 565.0 L732.9 567.0 L735.3 568.9 L737.7 570.9" stroke="#ae4648"/>
<path d="M222.2 570.8 L224.6 568.7 L227.0 566.7 L229.4 564.7 L231.8 562.6 L234.2 560.6 L236.5 558.5 L238.9 556.5 L241.2 554.4 L243.6 552.3 L245.9 550.2 L248.3 548.0 L250.7 545.9 L253.0 543.7 L255.4 541.5 L257.8 539.3 L260.2 537.1 L262.6 534.8 L265.0 532.6 L267.5 530.3 L269.9 527.9 L272.4 525.6 L274.9 523.2 L277.4 520.8 L280.0 518.3 L282.6 515.8 L285.2 513.3 L287.9 510.7 L290.6 508.1 L293.3 505.5 L296.1 502.8 L299.0 500.0 L301.9 497.3 L304.8 494.4 L307.9 491.6 L310.9 488.6 L314.1 485.6 L317.3 482.6 L320.6 479.5 L324.0 476.4 L327.5 473.2 L331.0 470.0 L334.7 466.7 L338.4 463.4 L342.3 460.1 L346.2 456.7 L350.3 453.2 L354.5 449.8 L358.8 446.3 L363.3 442.8 L367.9 439.3 L372.6 435.8 L377.5 432.4 L382.5 429.0 L387.6 425.6 L392.9 422.3 L398.3 419.2 L403.9 416.1 L409.6 413.2 L415.5 410.5 L421.4 407.9 L427.5 405.6 L433.7 403.5 L440.0 401.8 L446.4 400.2 L452.9 399.1 L459.4 398.2 L465.9 397.7 L472.5 397.5 L479.1 397.7 L485.6 398.2 L492.1 399.1 L498.6 400.2 L505.0 401.8 L511.3 403.5 L517.5 405.6 L523.6 407.9 L529.5 410.5 L535.4 413.2 L541.1 416.1 L546.7 419.2 L552.1 422.3 L557.4 425.6 L562.5 429.0 L567.5 432.4 L572.4 435.8 L577.1 439.3 L581.7 442.8 L586.2 446.3 L590.5 449.8 L594.7 453.2 L598.8 456.7 L602.7 460.1 L606.6 463.4 L610.3 466.7 L614.0 470.0 L617.5 473.2 L621.0 476.4 L624.4 479.5 L627.7 482.6 L630.9 485.6 L634.1 488.6 L637.1 491.6 L640.2 494.4 L643.1 497.3 L646.0 500.0 L648.9 502.8 L651.7 505.5 L654.4 508.1 L657.1 510.7 L659.8 513.3 L662.4 515.8 L665.0 518.3 L667.6 520.8 L670.1 523.2 L672.6 525.6 L675.1 527.9 L677.5 530.3 L680.0 532.6 L682.4 534.8 L684.8 537.1 L687.2 539.3 L689.6 541.5 L692.0 543.7 L694.3 545.9 L696.7 548.0 L699.1 550.2 L701.4 552.3 L703.8 554.4 L706.1 556.5 L708.5 558.5 L710.8 560.6 L713.2 562.6 L715.6 564.7 L718.0 566.7 L720.4 568.7 L722.8 570.8" stroke="#e4de1f"/>
<path d="M242.6 570.4 L245.0 568.3 L247.4 566.3 L249.8 564.2 L252.1 562.1 L254.5 560.0 L256.9 557.9 L259.3 555.8 L261.7 553.7 L264.1 551.6 L266.5 549.5 L268.9 547.3 L271.4 545.2 L273.8 543.0 L276.3 540.8 L278.8 538.7 L281.3 536.4 L283.8 534.2 L286.4 532.0 L288.9 529.7 L291.5 527.4 L294.2 525.1 L296.9 522.8 L299.6 520.5 L302.3 518.1 L305.1 515.7 L308.0 513.3 L310.8 510.9 L313.8 508.4 L316.8 505.9 L319.8 503.4 L322.9 500.8 L326.1 498.3 L329.3 495.7 L332.6 493.1 L335.9 490.5 L339.4 487.8 L342.9 485.1 L346.5 482.5 L350.2 479.8 L354.0 477.1 L357.8 474.4 L361.8 471.7 L365.8 469.0 L370.0 466.3 L374.2 463.6 L378.6 461.0 L383.0 458.4 L387.6 455.9 L392.3 453.4 L397.0 451.0 L401.9 448.7 L406.9 446.4 L411.9 444.3 L417.1 442.3 L422.4 440.5 L427.7 438.8 L433.1 437.2 L438.6 435.8 L444.1 434.7 L449.8 433.7 L455.4 432.9 L461.1 432.3 L466.8 432.0 L472.5 431.9 L478.2 432.0 L483.9 432.3 L489.6 432.9 L495.2 433.7 L500.9 434.7 L506.4 435.8 L511.9 437.2 L517.3 438.8 L522.6 440.5 L527.9 442.3 L533.1 444.3 L538.1 446.4 L543.1 448.7 L548.0 451.0 L552.7 453.4 L557.4 455.9 L562.0 458.4 L566.4 461.0 L570.8 463.6 L575.0 466.3 L579.2 469.0 L583.2 471.7 L587.2 474.4 L591.0 477.1 L594.8 479.8 L598.5 482.5 L602.1 485.1 L605.6 487.8 L609.1 490.5 L612.4 493.1 L615.7 495.7 L618.9 498.3 L622.1 500.8 L625.2 503.4 L628.2 505.9 L631.2 508.4 L634.2 510.9 L637.0 513.3 L639.9 515.7 L642.7 518.1 L645.4 520.5 L648.1 522.8 L650.8 525.1 L653.5 527.4 L656.1 529.7 L658.6 532.0 L661.2 534.2 L663.7 536.4 L666.2 538.7 L668.7 540.8 L671.2 543.0 L673.6 545.2 L676.1 547.3 L678.5 549.5 L680.9 551.6 L683.3 553.7 L685.7 555.8 L688.1 557.9 L690.5 560.0 L692.9 562.1 L695.2 564.2 L697.6 566.3 L700.0 568.3 L702.4 570.4" stroke="#7d7d7d"/>
<path d="M259.6 571.2 L262.0 569.1 L264.4 567.0 L266.8 564.9 L269.2 562.8 L271.6 560.8 L274.0 558.7 L276.4 556.6 L278.8 554.5 L281.3 552.4 L283.7 550.3 L286.2 548.2 L288.7 546.1 L291.2 544.0 L293.7 541.9 L296.3 539.8 L298.9 537.7 L301.5 535.5 L304.1 533.4 L306.8 531.2 L309.5 529.0 L312.3 526.9 L315.1 524.7 L317.9 522.5 L320.8 520.3 L323.7 518.0 L326.7 515.8 L329.7 513.6 L332.7 511.3 L335.9 509.0 L339.1 506.8 L342.3 504.5 L345.6 502.2 L349.0 500.0 L352.4 497.7 L355.9 495.4 L359.5 493.2 L363.2 490.9 L366.9 488.7 L370.7 486.5 L374.6 484.3 L378.5 482.1 L382.6 480.0 L386.7 477.9 L390.9 475.8 L395.2 473.9 L399.5 471.9 L404.0 470.1 L408.5 468.3 L413.1 466.6 L417.8 465.0 L422.5 463.5 L427.3 462.1 L432.2 460.9 L437.1 459.7 L442.0 458.7 L447.0 457.9 L452.1 457.2 L457.2 456.6 L462.3 456.2 L467.4 456.0 L472.5 455.9 L477.6 456.0 L482.7 456.2 L487.8 456.6 L492.9 457.2 L498.0 457.9 L503.0 458.7 L507.9 459.7 L512.8 460.9 L517.7 462.1 L522.5 463.5 L527.2 465.0 L531.9 466.6 L536.5 468.3 L541.0 470.1 L545.5 471.9 L549.8 473.9 L554.1 475.8 L558.3 477.9 L562.4 480.0 L566.5 482.1 L570.4 484.3 L574.3 486.5 L578.1 488.7 L581.8 490.9 L585.5 493.2 L589.1 495.4 L592.6 497.7 L596.0 500.0 L599.4 502.2 L602.7 504.5 L605.9 506.8 L609.1 509.0 L612.3 511.3 L615.3 513.6 L618.3 515.8 L621.3 518.0 L624.2 520.3 L627.1 522.5 L629.9 524.7 L632.7 526.9 L635.5 529.0 L638.2 531.2 L640.9 533.4 L643.5 535.5 L646.1 537.7 L648.7 539.8 L651.3 541.9 L653.8 544.0 L656.3 546.1 L658.8 548.2 L661.3 550.3 L663.7 552.4 L666.2 554.5 L668.6 556.6 L671.0 558.7 L673.4 560.8 L675.8 562.8 L678.2 564.9 L680.6 567.0 L683.0 569.1 L685.4 571.2" stroke="#bdbdbd"/>
<path d="M279.8 570.4 L282.1 568.4 L284.5 566.3 L286.9 564.3 L289.3 562.3 L291.8 560.2 L294.2 558.2 L296.7 556.2 L299.1 554.2 L301.6 552.1 L304.1 550.1 L306.7 548.1 L309.2 546.1 L311.8 544.1 L314.4 542.1 L317.1 540.1 L319.8 538.1 L322.5 536.1 L325.2 534.1 L328.0 532.1 L330.8 530.0 L333.7 528.0 L336.6 526.0 L339.6 524.0 L342.6 522.1 L345.6 520.1 L348.7 518.1 L351.9 516.1 L355.1 514.1 L358.4 512.2 L361.7 510.3 L365.1 508.3 L368.5 506.4 L372.0 504.5 L375.6 502.7 L379.2 500.9 L382.9 499.1 L386.6 497.3 L390.4 495.6 L394.3 493.9 L398.2 492.3 L402.2 490.7 L406.2 489.2 L410.3 487.8 L414.5 486.4 L418.7 485.1 L423.0 483.8 L427.3 482.7 L431.7 481.7 L436.1 480.7 L440.6 479.9 L445.1 479.1 L449.6 478.5 L454.1 477.9 L458.7 477.5 L463.3 477.2 L467.9 477.1 L472.5 477.0 L477.1 477.1 L481.7 477.2 L486.3 477.5 L490.9 477.9 L495.4 478.5 L499.9 479.1 L504.4 479.9 L508.9 480.7 L513.3 481.7 L517.7 482.7 L522.0 483.8 L526.3 485.1 L530.5 486.4 L534.7 487.8 L538.8 489.2 L542.8 490.7 L546.8 492.3 L550.7 493.9 L554.6 495.6 L558.4 497.3 L562.1 499.1 L565.8 500.9 L569.4 502.7 L573.0 504.5 L576.5 506.4 L579.9 508.3 L583.3 510.3 L586.6 512.2 L589.9 514.1 L593.1 516.1 L596.3 518.1 L599.4 520.1 L602.4 522.1 L605.4 524.0 L608.4 526.0 L611.3 528.0 L614.2 530.0 L617.0 532.1 L619.8 534.1 L622.5 536.1 L625.2 538.1 L627.9 540.1 L630.6 542.1 L633.2 544.1 L635.8 546.1 L638.3 548.1 L640.9 550.1 L643.4 552.1 L645.9 554.2 L648.3 556.2 L650.8 558.2 L653.2 560.2 L655.7 562.3 L658.1 564.3 L660.5 566.3 L662.9 568.4 L665.2 570.4" stroke="#7b5e13"/>
<path d="M292.4 572.0 L294.7 570.0 L297.1 568.0 L299.5 566.0 L301.9 564.0 L304.3 562.0 L306.8 560.1 L309.2 558.1 L311.7 556.2 L314.2 554.2 L316.7 552.3 L319.3 550.4 L321.9 548.5 L324.5 546.6 L327.1 544.6 L329.8 542.8 L332.5 540.9 L335.2 539.0 L338.0 537.1 L340.8 535.2 L343.7 533.4 L346.5 531.5 L349.5 529.7 L352.5 527.9 L355.5 526.1 L358.5 524.3 L361.7 522.5 L364.8 520.7 L368.0 519.0 L371.3 517.3 L374.6 515.6 L378.0 513.9 L381.4 512.3 L384.9 510.7 L388.4 509.1 L392.0 507.6 L395.6 506.1 L399.3 504.6 L403.0 503.2 L406.8 501.9 L410.6 500.6 L414.5 499.4 L418.4 498.2 L422.4 497.1 L426.4 496.1 L430.5 495.1 L434.5 494.3 L438.7 493.5 L442.8 492.8 L447.0 492.1 L451.2 491.6 L455.5 491.2 L459.7 490.8 L464.0 490.6 L468.2 490.4 L472.5 490.4 L476.8 490.4 L481.0 490.6 L485.3 490.8 L489.5 491.2 L493.8 491.6 L498.0 492.1 L502.2 492.8 L506.3 493.5 L510.5 494.3 L514.5 495.1 L518.6 496.1 L522.6 497.1 L526.6 498.2 L530.5 499.4 L534.4 500.6 L538.2 501.9 L542.0 503.2 L545.7 504.6 L549.4 506.1 L553.0 507.6 L556.6 509.1 L560.1 510.7 L563.6 512.3 L567.0 513.9 L570.4 515.6 L573.7 517.3 L577.0 519.0 L580.2 520.7 L583.3 522.5 L586.5 524.3 L589.5 526.1 L592.5 527.9 L595.5 529.7 L598.5 531.5 L601.3 533.4 L604.2 535.2 L607.0 537.1 L609.8 539.0 L612.5 540.9 L615.2 542.8 L617.9 544.6 L620.5 546.6 L623.1 548.5 L625.7 550.4 L628.3 552.3 L630.8 554.2 L633.3 556.2 L635.8 558.1 L638.2 560.1 L640.7 562.0 L643.1 564.0 L645.5 566.0 L647.9 568.0 L650.3 570.0 L652.6 572.0" stroke="#df9260"/>
<path d="M311.7 571.4 L314.0 569.5 L316.4 567.6 L318.8 565.7 L321.2 563.8 L323.6 561.9 L326.1 560.1 L328.6 558.3 L331.1 556.4 L333.6 554.6 L336.2 552.9 L338.8 551.1 L341.4 549.3 L344.0 547.6 L346.7 545.8 L349.4 544.1 L352.2 542.4 L355.0 540.7 L357.8 539.1 L360.7 537.4 L363.6 535.8 L366.5 534.2 L369.5 532.6 L372.5 531.1 L375.6 529.5 L378.7 528.0 L381.8 526.5 L385.0 525.1 L388.2 523.7 L391.5 522.3 L394.8 520.9 L398.2 519.6 L401.6 518.4 L405.1 517.1 L408.5 516.0 L412.1 514.8 L415.6 513.8 L419.2 512.7 L422.9 511.8 L426.5 510.9 L430.3 510.0 L434.0 509.2 L437.8 508.5 L441.5 507.9 L445.4 507.3 L449.2 506.8 L453.1 506.4 L456.9 506.0 L460.8 505.8 L464.7 505.6 L468.6 505.4 L472.5 505.4 L476.4 505.4 L480.3 505.6 L484.2 505.8 L488.1 506.0 L491.9 506.4 L495.8 506.8 L499.6 507.3 L503.5 507.9 L507.2 508.5 L511.0 509.2 L514.7 510.0 L518.5 510.9 L522.1 511.8 L525.8 512.7 L529.4 513.8 L532.9 514.8 L536.5 516.0 L539.9 517.1 L543.4 518.4 L546.8 519.6 L550.2 520.9 L553.5 522.3 L556.8 523.7 L560.0 525.1 L563.2 526.5 L566.3 528.0 L569.4 529.5 L572.5 531.1 L575.5 532.6 L578.5 534.2 L581.4 535.8 L584.3 537.4 L587.2 539.1 L590.0 540.7 L592.8 542.4 L595.6 544.1 L598.3 545.8 L601.0 547.6 L603.6 549.3 L606.2 551.1 L608.8 552.9 L611.4 554.6 L613.9 556.4 L616.4 558.3 L618.9 560.1 L621.4 561.9 L623.8 563.8 L626.2 565.7 L628.6 567.6 L631.0 569.5 L633.3 571.4" stroke="#5d6c80"/>
<path d="M320.9 571.0 L323.2 569.2 L325.6 567.3 L328.0 565.5 L330.4 563.7 L332.9 561.9 L335.3 560.1 L337.8 558.4 L340.3 556.6 L342.9 554.9 L345.4 553.2 L348.0 551.5 L350.7 549.8 L353.3 548.2 L356.0 546.6 L358.8 544.9 L361.5 543.3 L364.3 541.8 L367.2 540.2 L370.1 538.7 L373.0 537.2 L375.9 535.7 L378.9 534.2 L381.9 532.8 L385.0 531.4 L388.1 530.0 L391.3 528.7 L394.5 527.4 L397.7 526.2 L400.9 524.9 L404.2 523.8 L407.6 522.6 L411.0 521.5 L414.4 520.5 L417.8 519.5 L421.3 518.5 L424.8 517.6 L428.3 516.8 L431.9 516.0 L435.5 515.3 L439.1 514.7 L442.8 514.1 L446.4 513.5 L450.1 513.1 L453.8 512.7 L457.6 512.4 L461.3 512.1 L465.0 511.9 L468.8 511.8 L472.5 511.8 L476.2 511.8 L480.0 511.9 L483.7 512.1 L487.4 512.4 L491.2 512.7 L494.9 513.1 L498.6 513.5 L502.2 514.1 L505.9 514.7 L509.5 515.3 L513.1 516.0 L516.7 516.8 L520.2 517.6 L523.7 518.5 L527.2 519.5 L530.6 520.5 L534.0 521.5 L537.4 522.6 L540.8 523.8 L544.1 524.9 L547.3 526.2 L550.5 527.4 L553.7 528.7 L556.9 530.0 L560.0 531.4 L563.1 532.8 L566.1 534.2 L569.1 535.7 L572.0 537.2 L574.9 538.7 L577.8 540.2 L580.7 541.8 L583.5 543.3 L586.2 544.9 L589.0 546.6 L591.7 548.2 L594.3 549.8 L597.0 551.5 L599.6 553.2 L602.1 554.9 L604.7 556.6 L607.2 558.4 L609.7 560.1 L612.1 561.9 L614.6 563.7 L617.0 565.5 L619.4 567.3 L621.8 569.2 L624.1 571.0" stroke="#3a5b96"/>
<path d="M326.0 571.4 L328.4 569.6 L330.8 567.8 L333.1 566.0 L335.6 564.2 L338.0 562.5 L340.5 560.7 L342.9 559.0 L345.5 557.3 L348.0 555.7 L350.6 554.0 L353.2 552.4 L355.8 550.7 L358.5 549.1 L361.2 547.6 L363.9 546.0 L366.7 544.5 L369.5 543.0 L372.3 541.5 L375.2 540.0 L378.1 538.6 L381.0 537.2 L384.0 535.8 L387.0 534.5 L390.0 533.1 L393.1 531.9 L396.3 530.6 L399.4 529.4 L402.6 528.2 L405.9 527.1 L409.1 526.0 L412.4 525.0 L415.8 524.0 L419.1 523.0 L422.5 522.1 L426.0 521.3 L429.4 520.5 L432.9 519.7 L436.4 519.0 L440.0 518.4 L443.5 517.9 L447.1 517.4 L450.7 516.9 L454.3 516.5 L457.9 516.2 L461.6 516.0 L465.2 515.8 L468.9 515.7 L472.5 515.7 L476.1 515.7 L479.8 515.8 L483.4 516.0 L487.1 516.2 L490.7 516.5 L494.3 516.9 L497.9 517.4 L501.5 517.9 L505.0 518.4 L508.6 519.0 L512.1 519.7 L515.6 520.5 L519.0 521.3 L522.5 522.1 L525.9 523.0 L529.2 524.0 L532.6 525.0 L535.9 526.0 L539.1 527.1 L542.4 528.2 L545.6 529.4 L548.7 530.6 L551.9 531.9 L555.0 533.1 L558.0 534.5 L561.0 535.8 L564.0 537.2 L566.9 538.6 L569.8 540.0 L572.7 541.5 L575.5 543.0 L578.3 544.5 L581.1 546.0 L583.8 547.6 L586.5 549.1 L589.2 550.7 L591.8 552.4 L594.4 554.0 L597.0 555.7 L599.5 557.3 L602.1 559.0 L604.5 560.7 L607.0 562.5 L609.4 564.2 L611.9 566.0 L614.2 567.8 L616.6 569.6 L619.0 571.4" stroke="#0b7e3d"/>
</g>
<path d="M45 503.3 L60 503.6 L75 504 L90 503.6 L105 503.2 L126 502.5 L150 500.6 L165 499.2 L172 498.6 L180 498.6 L190 499.1 L215 498.8 L230 497.2 L245 496.5 L280 497.2 L325 497.5 L373 497 L420 496 L445 495.1 L469 494.9 L495 496 L529 497.3 L580 498 L647 499.3 L740 499.8 L752 499.2 L765 499.8 L838 500.6 L889 501.2 L893 500.6 L895.5 498.8 L896 499 L896 566.6 L45 566.6Z" fill="rgba(40,46,56,0.36)" stroke="#0a0a0a" stroke-width="1.25" stroke-linejoin="round"/>
<text x="45.0" y="575.6" font-size="5.2" text-anchor="middle" fill="#000" stroke="#000" stroke-width="0.2" letter-spacing="0">-180°</text>
<text x="68.7" y="575.6" font-size="5.2" text-anchor="middle" fill="#000" stroke="#000" stroke-width="0.2" letter-spacing="0">-170°</text>
<text x="92.5" y="575.6" font-size="5.2" text-anchor="middle" fill="#000" stroke="#000" stroke-width="0.2" letter-spacing="0">-160°</text>
<text x="116.3" y="575.6" font-size="5.2" text-anchor="middle" fill="#000" stroke="#000" stroke-width="0.2" letter-spacing="0">-150°</text>
<text x="140.1" y="575.6" font-size="5.2" text-anchor="middle" fill="#000" stroke="#000" stroke-width="0.2" letter-spacing="0">-140°</text>
<text x="163.9" y="575.6" font-size="5.2" text-anchor="middle" fill="#000" stroke="#000" stroke-width="0.2" letter-spacing="0">-130°</text>
<text x="187.6" y="575.6" font-size="5.2" text-anchor="middle" fill="#000" stroke="#000" stroke-width="0.2" letter-spacing="0">-120°</text>
<text x="211.4" y="575.6" font-size="5.2" text-anchor="middle" fill="#000" stroke="#000" stroke-width="0.2" letter-spacing="0">-110°</text>
<text x="235.2" y="575.6" font-size="5.2" text-anchor="middle" fill="#000" stroke="#000" stroke-width="0.2" letter-spacing="0">-100°</text>
<text x="259.0" y="575.6" font-size="5.2" text-anchor="middle" fill="#000" stroke="#000" stroke-width="0.2" letter-spacing="0">-90°</text>
<text x="282.8" y="575.6" font-size="5.2" text-anchor="middle" fill="#000" stroke="#000" stroke-width="0.2" letter-spacing="0">-80°</text>
<text x="306.5" y="575.6" font-size="5.2" text-anchor="middle" fill="#000" stroke="#000" stroke-width="0.2" letter-spacing="0">-70°</text>
<text x="330.3" y="575.6" font-size="5.2" text-anchor="middle" fill="#000" stroke="#000" stroke-width="0.2" letter-spacing="0">-60°</text>
<text x="354.1" y="575.6" font-size="5.2" text-anchor="middle" fill="#000" stroke="#000" stroke-width="0.2" letter-spacing="0">-50°</text>
<text x="377.9" y="575.6" font-size="5.2" text-anchor="middle" fill="#000" stroke="#000" stroke-width="0.2" letter-spacing="0">-40°</text>
<text x="401.7" y="575.6" font-size="5.2" text-anchor="middle" fill="#000" stroke="#000" stroke-width="0.2" letter-spacing="0">-30°</text>
<text x="425.4" y="575.6" font-size="5.2" text-anchor="middle" fill="#000" stroke="#000" stroke-width="0.2" letter-spacing="0">-20°</text>
<text x="449.2" y="575.6" font-size="5.2" text-anchor="middle" fill="#000" stroke="#000" stroke-width="0.2" letter-spacing="0">-10°</text>
<text x="473.0" y="575.6" font-size="5.2" text-anchor="middle" fill="#000" stroke="#000" stroke-width="0.2" letter-spacing="0">0°</text>
<text x="496.8" y="575.6" font-size="5.2" text-anchor="middle" fill="#000" stroke="#000" stroke-width="0.2" letter-spacing="0">10°</text>
<text x="520.6" y="575.6" font-size="5.2" text-anchor="middle" fill="#000" stroke="#000" stroke-width="0.2" letter-spacing="0">20°</text>
<text x="544.3" y="575.6" font-size="5.2" text-anchor="middle" fill="#000" stroke="#000" stroke-width="0.2" letter-spacing="0">30°</text>
<text x="568.1" y="575.6" font-size="5.2" text-anchor="middle" fill="#000" stroke="#000" stroke-width="0.2" letter-spacing="0">40°</text>
<text x="591.9" y="575.6" font-size="5.2" text-anchor="middle" fill="#000" stroke="#000" stroke-width="0.2" letter-spacing="0">50°</text>
<text x="615.7" y="575.6" font-size="5.2" text-anchor="middle" fill="#000" stroke="#000" stroke-width="0.2" letter-spacing="0">60°</text>
<text x="639.5" y="575.6" font-size="5.2" text-anchor="middle" fill="#000" stroke="#000" stroke-width="0.2" letter-spacing="0">70°</text>
<text x="663.2" y="575.6" font-size="5.2" text-anchor="middle" fill="#000" stroke="#000" stroke-width="0.2" letter-spacing="0">80°</text>
<text x="687.0" y="575.6" font-size="5.2" text-anchor="middle" fill="#000" stroke="#000" stroke-width="0.2" letter-spacing="0">90°</text>
<text x="710.8" y="575.6" font-size="5.2" text-anchor="middle" fill="#000" stroke="#000" stroke-width="0.2" letter-spacing="0">100°</text>
<text x="734.6" y="575.6" font-size="5.2" text-anchor="middle" fill="#000" stroke="#000" stroke-width="0.2" letter-spacing="0">110°</text>
<text x="758.4" y="575.6" font-size="5.2" text-anchor="middle" fill="#000" stroke="#000" stroke-width="0.2" letter-spacing="0">120°</text>
<text x="782.1" y="575.6" font-size="5.2" text-anchor="middle" fill="#000" stroke="#000" stroke-width="0.2" letter-spacing="0">130°</text>
<text x="805.9" y="575.6" font-size="5.2" text-anchor="middle" fill="#000" stroke="#000" stroke-width="0.2" letter-spacing="0">140°</text>
<text x="829.7" y="575.6" font-size="5.2" text-anchor="middle" fill="#000" stroke="#000" stroke-width="0.2" letter-spacing="0">150°</text>
<text x="853.5" y="575.6" font-size="5.2" text-anchor="middle" fill="#000" stroke="#000" stroke-width="0.2" letter-spacing="0">160°</text>
<text x="877.3" y="575.6" font-size="5.2" text-anchor="middle" fill="#000" stroke="#000" stroke-width="0.2" letter-spacing="0">170°</text>
<text x="901.0" y="575.6" font-size="5.2" text-anchor="middle" fill="#000" stroke="#000" stroke-width="0.2" letter-spacing="0">180°</text>
<text x="472.5" y="252.4" font-size="5.6" text-anchor="middle" fill="#000" stroke="#000" stroke-width="0.2" letter-spacing="-0.1">Giugno</text>
<text x="472.5" y="280.0" font-size="5.6" text-anchor="middle" fill="#000" stroke="#000" stroke-width="0.2" letter-spacing="-0.1">Luglio</text>
<text x="472.5" y="316.7" font-size="5.6" text-anchor="middle" fill="#000" stroke="#000" stroke-width="0.2" letter-spacing="-0.1">Maggio</text>
<text x="472.5" y="363.7" font-size="5.6" text-anchor="middle" fill="#000" stroke="#000" stroke-width="0.2" letter-spacing="-0.1">Agosto</text>
<text x="472.5" y="397.2" font-size="5.6" text-anchor="middle" fill="#000" stroke="#000" stroke-width="0.2" letter-spacing="-0.1">Aprile</text>
<text x="472.5" y="431.6" font-size="5.6" text-anchor="middle" fill="#000" stroke="#000" stroke-width="0.2" letter-spacing="-0.1">Settembre</text>
<text x="472.5" y="455.6" font-size="5.6" text-anchor="middle" fill="#000" stroke="#000" stroke-width="0.2" letter-spacing="-0.1">Marzo</text>
<text x="472.5" y="476.7" font-size="5.6" text-anchor="middle" fill="#000" stroke="#000" stroke-width="0.2" letter-spacing="-0.1">Ottobre</text>
<text x="472.5" y="490.1" font-size="5.6" text-anchor="middle" fill="#000" stroke="#000" stroke-width="0.2" letter-spacing="-0.1">Febbraio</text>
<text x="472.5" y="505.1" font-size="5.6" text-anchor="middle" fill="#000" stroke="#000" stroke-width="0.2" letter-spacing="-0.1">Novembre</text>
<text x="472.5" y="511.5" font-size="5.6" text-anchor="middle" fill="#000" stroke="#000" stroke-width="0.2" letter-spacing="-0.1">Gennaio</text>
<text x="472.5" y="515.4" font-size="5.6" text-anchor="middle" fill="#000" stroke="#000" stroke-width="0.2" letter-spacing="-0.1">Dicembre</text>
<path d="M598 146.5H699M648.5 146V197" stroke="#000" stroke-width="1.1"/><rect x="643.6" y="144.6" width="10" height="6.9" fill="none" stroke="#000" stroke-width="1.2"/>
</svg>
<div id="hscroll"><div id="hthumb"></div><svg class="abs" style="left:3px;top:4.5px" width="10" height="10" viewBox="0 0 10 10"><path d="M7.5 1.2 L3 5 L7.5 8.8" fill="none" stroke="#404040" stroke-width="1.8"/></svg></div>
<div id="panel">
 <div id="phead"><span id="ptitle">Risultati Calcolo</span><svg class="abs" style="left:226px;top:10px" width="50" height="22" viewBox="1165 155 50 22" fill="none"><path d="M1182.3 163V159.8H1170.6V171H1182.3V167.8" stroke="#151c2c" stroke-width="1.3"/><path d="M1176.4 165.4H1186.4" stroke="#151c2c" stroke-width="1.2"/><path d="M1175.4 165.4L1179.4 162.4V168.4Z" fill="#151c2c"/><path d="M1202.4 160.4L1207.4 165.2L1202.4 170Z" fill="#151c2c"/></svg></div>
 <div id="gbox"><div id="gcap"><span class="sx">Irradiazione media mensile sul piano orizzontale</span></div></div>
 <div id="grid">
  <div class="hrow">
   <div class="hc" style="left:0;width:102px"><span style="top:21.5px">Mese</span></div>
   <div class="hc" style="left:102px;width:75px"><span style="top:2px">Irradiazione<br>senza<br>ostruzioni<br>[kWh/m²]</span></div>
   <div class="hc" style="left:177px;width:76px"><span style="top:8.3px">Irradiazione<br>con ostruzioni<br>[kWh/m²]</span></div>
  </div>
  <div class="row" style="top:57.5px"><b></b><span style="left:3.5px">Gen</span><i style="left:102px"></i><span style="left:106px">54,254</span><i style="left:177px"></i><span style="left:181px">24,064</span></div>
  <div class="row" style="top:76.5px"><span style="left:3.5px">Feb</span><i style="left:102px"></i><span style="left:106px">70,006</span><i style="left:177px"></i><span style="left:181px">41,990</span></div>
  <div class="row" style="top:95.5px"><span style="left:3.5px">Mar</span><i style="left:102px"></i><span style="left:106px">114,537</span><i style="left:177px"></i><span style="left:181px">91,043</span></div>
  <div class="row" style="top:114.5px"><span style="left:3.5px">Apr</span><i style="left:102px"></i><span style="left:106px">155,846</span><i style="left:177px"></i><span style="left:181px">133,487</span></div>
  <div class="row" style="top:133.5px"><span style="left:3.5px">Mag</span><i style="left:102px"></i><span style="left:106px">185,154</span><i style="left:177px"></i><span style="left:181px">163,207</span></div>
  <div class="row" style="top:152.5px"><span style="left:3.5px">Giu</span><i style="left:102px"></i><span style="left:106px">212,517</span><i style="left:177px"></i><span style="left:181px">187,086</span></div>
  <div class="row" style="top:171.5px"><span style="left:3.5px">Lug</span><i style="left:102px"></i><span style="left:106px">238,547</span><i style="left:177px"></i><span style="left:181px">206,704</span></div>
  <div class="row" style="top:190.5px"><span style="left:3.5px">Ago</span><i style="left:102px"></i><span style="left:106px">197,210</span><i style="left:177px"></i><span style="left:181px">169,607</span></div>
  <div class="row" style="top:209.5px"><span style="left:3.5px">Set</span><i style="left:102px"></i><span style="left:106px">142,511</span><i style="left:177px"></i><span style="left:181px">118,667</span></div>
  <div class="row" style="top:228.5px"><span style="left:3.5px">Ott</span><i style="left:102px"></i><span style="left:106px">101,619</span><i style="left:177px"></i><span style="left:181px">74,365</span></div>
  <div class="row" style="top:247.5px"><span style="left:3.5px">Nov</span><i style="left:102px"></i><span style="left:106px">59,171</span><i style="left:177px"></i><span style="left:181px">26,614</span></div>
  <div class="row" style="top:266.5px"><span style="left:3.5px">Dic</span><i style="left:102px"></i><span style="left:106px">52,532</span><i style="left:177px"></i><span style="left:181px">23,204</span></div>

  <div class="frow"><span class="ft" style="right:76px;width:75px">1583,904</span><span class="ft" style="right:2px;width:76px">1260,038</span></div>
 </div>
 <div id="coefl">Coeff. di ombreggiamento [%]</div>
 <div id="coefv"><span class="sx">0,20</span></div>
</div>
<div id="sidetabs">
 <div id="st1"><span>Proprietà</span></div>
 <div id="st2"><span>Risultati Calcolo</span><svg class="abs" style="left:-1px;top:43px" width="7" height="12" viewBox="0 0 7 12"><path d="M0 0.6L5.6 5.6L0 10.6Z" fill="#d3dff0" stroke="#dd8f1c" stroke-width="0.6"/><path d="M0 0V11.5" stroke="#d3dff0" stroke-width="2"/></svg></div>
</div>
<div id="cmd">
 <div id="cmdh">Riga di comando</div>
 <div id="cmdl">Comando:</div>
 <div id="cmdi"></div>
 <svg class="abs" style="left:1196px;top:2.6px" width="36" height="14" viewBox="1207 621 36 14" fill="none"><path d="M1213 625H1217.4V629.4H1213ZM1211.8 629.6H1218.4M1215.2 629.6V633.2" stroke="#3b4a66" stroke-width="1.1"/><path d="M1216.4 625V629.4" stroke="#3b4a66" stroke-width="1.4"/><path d="M1229.6 625.2L1237 631.6M1237 625.2L1229.6 631.6" stroke="#3b4a66" stroke-width="2.1"/></svg>
</div>
<div id="status">
 <div id="coord">Coordinate: gamma 73 alfa 76</div>
 <div id="ssep"></div>
 <div id="snap">Snap</div>
<svg class="abs" style="left:0;top:-0.8px" width="1240" height="28" viewBox="8 663 1240 28" fill="none">
<defs><linearGradient id="mg" x1="0" y1="0" x2="0" y2="1"><stop offset="0" stop-color="#0f5f9e"/><stop offset="0.6" stop-color="#1b82c4"/><stop offset="1" stop-color="#7fc4ea"/></linearGradient><linearGradient id="bt" x1="0" y1="0" x2="0" y2="1"><stop offset="0" stop-color="#ffffff"/><stop offset="1" stop-color="#d4dce8"/></linearGradient></defs>
<circle cx="254.4" cy="676.1" r="6" stroke="#66748c" stroke-width="1"/><path d="M254 675.5L258 678.5" stroke="#1b6fb0" stroke-width="1.2"/><path d="M257.8 684.2V679.6A2.8 2.8 0 0 1 263.40000000000003 679.6V684.2" stroke="url(#mg)" stroke-width="2.4"/>
<path d="M276.6 671.5V683.5" stroke="#66748c" stroke-width="1" stroke-dasharray="2 1.5"/><path d="M276.6 671.5H287.5" stroke="#66748c" stroke-width="1" stroke-dasharray="2 1.5"/><rect x="275.6" y="670.5" width="2" height="2" fill="#1b6fb0"/><rect x="286.3" y="670.5" width="2" height="2" fill="#1b6fb0"/><rect x="275.6" y="682" width="2" height="2" fill="#1b6fb0"/><path d="M282.59999999999997 684.0V679.4A2.8 2.8 0 0 1 288.2 679.4V684.0" stroke="url(#mg)" stroke-width="2.4"/>
<path d="M302.5 671.5H314.5M305.5 671.5V684" stroke="#66748c" stroke-width="0.9" opacity="0.8"/><rect x="304.4" y="670.4" width="2.2" height="2.2" fill="#1b6fb0"/><path d="M307.8 684.0V679.4A2.8 2.8 0 0 1 313.40000000000003 679.4V684.0" stroke="url(#mg)" stroke-width="2.4"/>
<path d="M328.5 671V684" stroke="#66748c" stroke-width="1" stroke-dasharray="2 1.5"/><path d="M328 671H342" stroke="#66748c" stroke-width="1.6" stroke-dasharray="1.6 2"/><path d="M333.59999999999997 684.0V679.4A2.8 2.8 0 0 1 339.2 679.4V684.0" stroke="url(#mg)" stroke-width="2.4"/>
<path d="M355 671.5H365.5V675M355 671.5V680" stroke="#66748c" stroke-width="1"/><path d="M352.5 680H357" stroke="#1b6fb0" stroke-width="1.4"/><path d="M359.8 684.0V679.4A2.8 2.8 0 0 1 365.40000000000003 679.4V684.0" stroke="url(#mg)" stroke-width="2.4"/>
<path d="M379 672.5H393M383.5 669V685" stroke="#66748c" stroke-width="0.9" opacity="0.85"/><path d="M386.2 684.0V679.4A2.8 2.8 0 0 1 391.8 679.4V684.0" stroke="url(#mg)" stroke-width="2.4"/>
<path d="M406.7 669V685" stroke="#66748c" stroke-width="0.9" opacity="0.85"/><path d="M405 677H408.5" stroke="#1b6fb0" stroke-width="1.2"/><path d="M412.0 684.0V679.4A2.8 2.8 0 0 1 417.6 679.4V684.0" stroke="url(#mg)" stroke-width="2.4"/>
<path d="M432.9 669V685" stroke="#66748c" stroke-width="0.9" opacity="0.85"/><rect x="437" y="669.8" width="2.6" height="2.6" fill="#f4d0c8" stroke="#c0392b" stroke-width="0.8"/><path d="M437.59999999999997 684.0V679.4A2.8 2.8 0 0 1 443.2 679.4V684.0" stroke="url(#mg)" stroke-width="2.4"/>
<path d="M458.9 669V685" stroke="#b03a3a" stroke-width="0.9"/><path d="M458.9 670.5H463.5V674.5H470" stroke="#b03a3a" stroke-width="0.9"/><path d="M464.3 684.0V679.4A2.8 2.8 0 0 1 469.90000000000003 679.4V684.0" stroke="url(#mg)" stroke-width="2.4"/>
<circle cx="489.9" cy="675.7" r="6" stroke="#66748c" stroke-width="1" stroke-dasharray="2.5 1.6"/><circle cx="489.9" cy="669.7" r="1" fill="#1b6fb0"/><circle cx="483.9" cy="675.7" r="1" fill="#1b6fb0"/><path d="M490.2 684.4V679.8A2.8 2.8 0 0 1 495.8 679.8V684.4" stroke="url(#mg)" stroke-width="2.4"/>
<circle cx="515.7" cy="675.7" r="6" stroke="#66748c" stroke-width="0.9"/><path d="M510 669V685" stroke="#66748c" stroke-width="0.9" opacity="0.85"/><path d="M516.5 684.4V679.8A2.8 2.8 0 0 1 522.0999999999999 679.8V684.4" stroke="url(#mg)" stroke-width="2.4"/>
<circle cx="541.1" cy="676.8" r="7.2" fill="url(#bt)" stroke="#7d8796" stroke-width="1.1"/><path d="M537.3 676.8H544.9" stroke="#3a3f48" stroke-width="1.8"/>
<path d="M555.8 676.6H597" stroke="#3f6fa8" stroke-width="1"/><path d="M555.8 677.5H597" stroke="#e9f0f9" stroke-width="0.8"/><path d="M578.8 672V682" stroke="#3f6fa8" stroke-width="1"/>
<path d="M595.3 670.6H602.7V679.4L599 683.4L595.3 679.4Z" fill="#f7dd82" stroke="#d9b95c" stroke-width="0.9"/>
<circle cx="617" cy="676.8" r="7.2" fill="url(#bt)" stroke="#7d8796" stroke-width="1.1"/><path d="M613.2 676.8H620.8M617 673V680.6" stroke="#3a3f48" stroke-width="1.8"/>
</svg>
</div>
</div>
<div id="winborder"></div>
</body>
</html>
